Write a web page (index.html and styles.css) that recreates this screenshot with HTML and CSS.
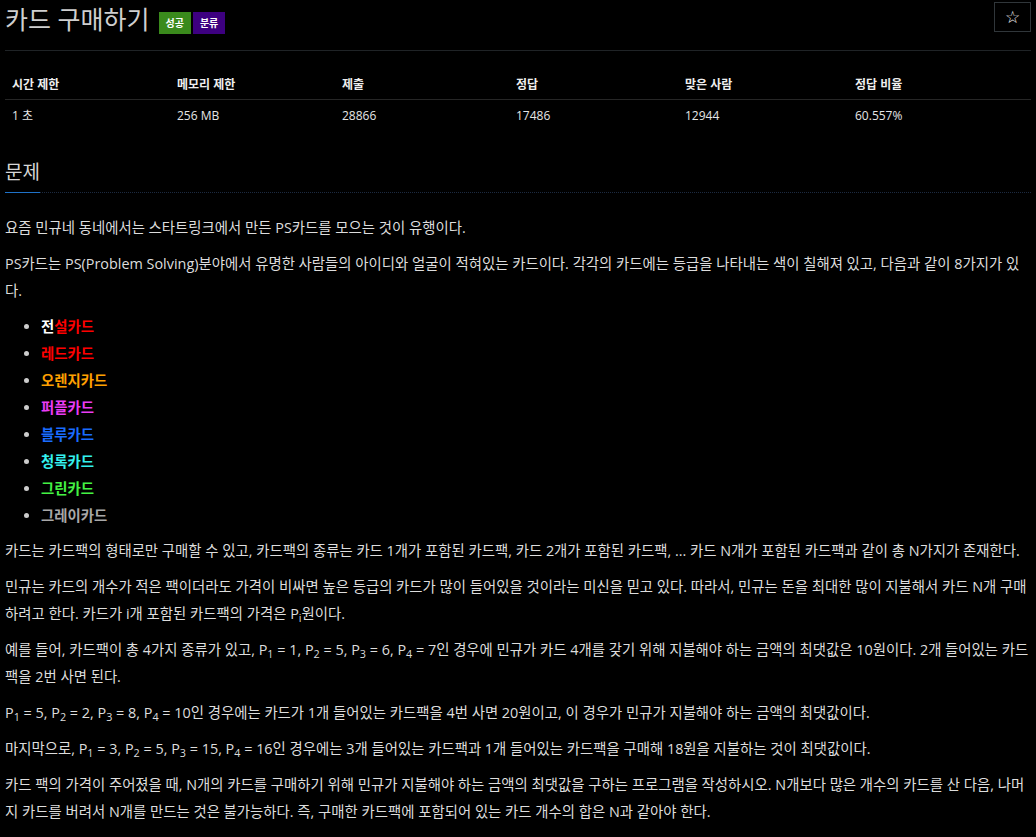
FILE: index.html
```html
<!DOCTYPE html>
<html lang="ko">
<head>
<meta charset="utf-8">
<title>카드 구매하기</title>
<link rel="stylesheet" href="styles.css">
</head>
<body>
<div class="page">
  <div class="page-header">
    <div class="title-row">
      <h1 class="title">카드 구매하기</h1>
      <span class="badge badge-green">성공</span>
      <span class="badge badge-purple">분류</span>
    </div>
    <button class="star-btn" type="button">☆</button>
  </div>

  <table class="info-table">
    <thead>
      <tr>
        <th class="c1">시간 제한</th>
        <th class="c2">메모리 제한</th>
        <th class="c3">제출</th>
        <th class="c4">정답</th>
        <th class="c5">맞은 사람</th>
        <th class="c6">정답 비율</th>
      </tr>
    </thead>
    <tbody>
      <tr>
        <td>1 초</td>
        <td>256 MB</td>
        <td>28866</td>
        <td>17486</td>
        <td>12944</td>
        <td>60.557%</td>
      </tr>
    </tbody>
  </table>

  <div class="headline">
    <h2 class="headline-title">문제</h2>
  </div>

  <div class="description">
    <p>요즘 민규네 동네에서는 스타트링크에서 만든 PS카드를 모으는 것이 유행이다.</p>
    <p>PS카드는 PS(Problem Solving)분야에서 유명한 사람들의 아이디와 얼굴이 적혀있는 카드이다. 각각의 카드에는 등급을 나타내는 색이 칠해져 있고, 다음과 같이 8가지가 있다.</p>
    <ul class="cards">
      <li><span class="c-white">전</span><span class="c-red">설카드</span></li>
      <li><span class="c-red">레드카드</span></li>
      <li><span class="c-orange">오렌지카드</span></li>
      <li><span class="c-purple">퍼플카드</span></li>
      <li><span class="c-blue">블루카드</span></li>
      <li><span class="c-cyan">청록카드</span></li>
      <li><span class="c-green">그린카드</span></li>
      <li><span class="c-gray">그레이카드</span></li>
    </ul>
    <p>카드는 카드팩의 형태로만 구매할 수 있고, 카드팩의 종류는 카드 1개가 포함된 카드팩, 카드 2개가 포함된 카드팩, ... 카드 N개가 포함된 카드팩과 같이 총 N가지가 존재한다.</p>
    <p>민규는 카드의 개수가 적은 팩이더라도 가격이 비싸면 높은 등급의 카드가 많이 들어있을 것이라는 미신을 믿고 있다. 따라서, 민규는 돈을 최대한 많이 지불해서 카드 N개 구매하려고 한다. 카드가 i개 포함된 카드팩의 가격은 P<sub>i</sub>원이다.</p>
    <p>예를 들어, 카드팩이 총 4가지 종류가 있고, P<sub>1</sub> = 1, P<sub>2</sub> = 5, P<sub>3</sub> = 6, P<sub>4</sub> = 7인 경우에 민규가 카드 4개를 갖기 위해 지불해야 하는 금액의 최댓값은 10원이다. 2개 들어있는 카드팩을 2번 사면 된다.</p>
    <p>P<sub>1</sub> = 5, P<sub>2</sub> = 2, P<sub>3</sub> = 8, P<sub>4</sub> = 10인 경우에는 카드가 1개 들어있는 카드팩을 4번 사면 20원이고, 이 경우가 민규가 지불해야 하는 금액의 최댓값이다.</p>
    <p>마지막으로, P<sub>1</sub> = 3, P<sub>2</sub> = 5, P<sub>3</sub> = 15, P<sub>4</sub> = 16인 경우에는 3개 들어있는 카드팩과 1개 들어있는 카드팩을 구매해 18원을 지불하는 것이 최댓값이다.</p>
    <p>카드 팩의 가격이 주어졌을 때, N개의 카드를 구매하기 위해 민규가 지불해야 하는 금액의 최댓값을 구하는 프로그램을 작성하시오. N개보다 많은 개수의 카드를 산 다음, 나머지 카드를 버려서 N개를 만드는 것은 불가능하다. 즉, 구매한 카드팩에 포함되어 있는 카드 개수의 합은 N과 같아야 한다.</p>
  </div>
</div>
</body>
</html>
```

FILE: styles.css
```css
html, body {
  margin: 0;
  padding: 0;
  background: #000;
}

body {
  font-family: "Open Sans", "Noto Sans CJK KR", sans-serif;
  color: #ddd;
  font-size: 14.4px;
}

.page {
  padding: 0 5px;
}

.page-header {
  display: flex;
  justify-content: space-between;
  align-items: flex-start;
  padding-bottom: 12px;
  border-bottom: 1px solid #1f2326;
}

.title-row {
  display: flex;
  align-items: flex-start;
}

.title {
  margin: 0;
  font-size: 25px;
  font-weight: normal;
  line-height: 38px;
  color: #cfcfcf;
}

.badge {
  display: inline-block;
  margin-top: 12px;
  height: 22px;
  line-height: 22px;
  padding: 0 7px;
  font-size: 10px;
  font-weight: bold;
  color: #fff;
}

.badge-green {
  margin-left: 9px;
  background: #3a8a1c;
}

.badge-purple {
  margin-left: 2px;
  background: #3d0080;
}

.star-btn {
  margin-top: 2px;
  width: 37px;
  height: 30px;
  background: #000;
  border: 1px solid #30363a;
  color: #f0f0f0;
  font-size: 17px;
  font-family: "DejaVu Sans", sans-serif;
  padding: 0;
  line-height: 26px;
}

.info-table {
  width: 100%;
  margin-top: 20px;
  border-collapse: collapse;
  table-layout: fixed;
}

.info-table th,
.info-table td {
  text-align: left;
  line-height: 16px;
}

.info-table th {
  padding: 6px 7px;
  font-size: 12px;
  font-weight: bold;
  color: #eee;
  border-bottom: 1px solid #262626;
}

.info-table td {
  padding: 8px 7px 6px 7px;
  font-size: 12px;
  color: #e6e6e6;
}

.c1 { width: 151px; }
.c2 { width: 151px; }
.c3 { width: 160px; }
.c4 { width: 155px; }
.c5 { width: 156px; }

.headline {
  margin-top: 30px;
  border-bottom: 1px dotted #1c2a40;
}

.headline-title {
  display: inline-block;
  margin: 0 0 -1px 0;
  font-size: 19px;
  font-weight: normal;
  line-height: 24px;
  padding-bottom: 8px;
  border-bottom: 1px solid #1f72c8;
  color: #d6d6d6;
}

.description {
  margin-top: 21px;
  line-height: 27px;
}

.description p {
  margin: 0 0 9px 0;
}

.description sub {
  font-size: 75%;
  line-height: 0;
  position: relative;
  vertical-align: baseline;
  bottom: -0.25em;
}

.cards {
  margin: 0 0 8px 0;
  padding-left: 36px;
  font-weight: bold;
}

.cards li::marker {
  color: #ccc;
}

.c-white { color: #ffffff; }
.c-red { color: #ff0000; }
.c-orange { color: #ffa000; }
.c-purple { color: #ea3cf5; }
.c-blue { color: #1a6cff; }
.c-cyan { color: #33f0ee; }
.c-green { color: #44f244; }
.c-gray { color: #a8a8a8; }
```
